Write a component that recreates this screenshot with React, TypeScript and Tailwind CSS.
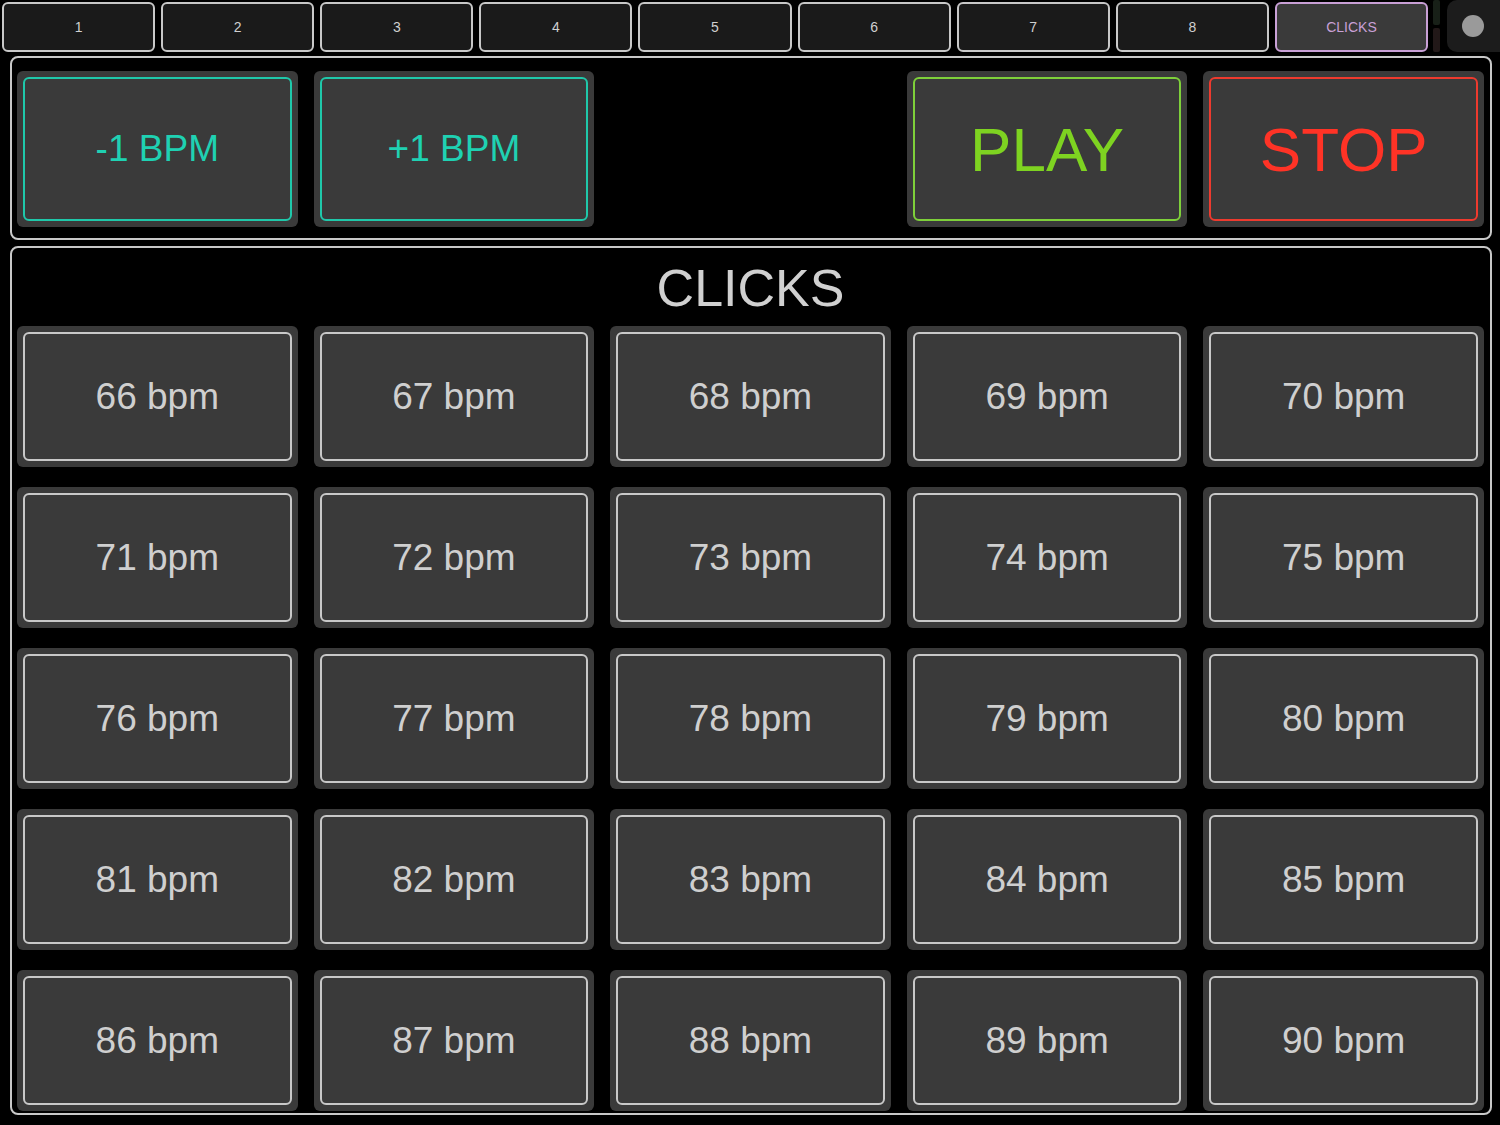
import React from "react";

const tabs = ["1", "2", "3", "4", "5", "6", "7", "8", "CLICKS"];
const bpms = Array.from({ length: 25 }, (_, i) => 66 + i);

const Pad = ({
  label,
  ring,
  text,
  size,
}: {
  label: string;
  ring: string;
  text: string;
  size: string;
}) => (
  <div className="bg-[#3a3a3a] rounded-[6px] p-[6px] flex">
    <button
      className={`flex-1 rounded-[6px] border-2 ${ring} ${text} ${size} flex items-center justify-center`}
    >
      {label}
    </button>
  </div>
);

export default function App() {
  return (
    <div
      className="w-[1500px] h-[1125px] bg-black overflow-hidden flex flex-col"
      style={{ fontFamily: '"Liberation Sans", Arial, sans-serif' }}
    >
      {/* tab strip */}
      <div className="flex h-[52px] shrink-0">
        <div className="grid grid-cols-9 gap-[6px] w-[1428px] pl-[2px] pt-[2px]">
          {tabs.map((t) => (
            <div
              key={t}
              className={`h-[50px] rounded-[6px] border-2 flex items-center justify-center text-[14px] ${
                t === "CLICKS"
                  ? "border-[#c9a0d6] bg-[#3a3a3a] text-[#c9a0d6]"
                  : "border-[#c8c8c8] bg-[#1a1a1a] text-[#d0d0d0]"
              }`}
            >
              {t}
            </div>
          ))}
        </div>
        <div className="ml-[5px] w-[7px] flex flex-col gap-[3px]">
          <div className="h-[25px] bg-[#182018] rounded-[2px]" />
          <div className="flex-1 bg-[#221818] rounded-[2px]" />
        </div>
        <div className="ml-[7px] flex-1 bg-[#1c1c1c] rounded-l-[10px] flex items-center pl-[15px]">
          <div className="w-[22px] h-[22px] rounded-full bg-[#9a9a9a]" />
        </div>
      </div>

      {/* transport panel */}
      <div className="ml-[10px] mr-[8px] mt-[4px] h-[184px] shrink-0 border-2 border-[#c8c8c8] rounded-[8px] pl-[5px] pr-[6px] pt-[13px] pb-[11px] grid grid-cols-5 gap-x-4">
        <Pad label="-1 BPM" ring="border-[#1fc8aa]" text="text-[#1fd1b2]" size="text-[37px]" />
        <Pad label="+1 BPM" ring="border-[#1fc8aa]" text="text-[#1fd1b2]" size="text-[37px]" />
        <div />
        <Pad label="PLAY" ring="border-[#7ed03a]" text="text-[#7ed321]" size="text-[62px]" />
        <Pad label="STOP" ring="border-[#ee3a2e]" text="text-[#ff3326]" size="text-[62px]" />
      </div>

      {/* clicks panel */}
      <div className="ml-[10px] mr-[8px] mt-[6px] mb-[10px] flex-1 border-2 border-[#c8c8c8] rounded-[8px] pl-[5px] pr-[6px] flex flex-col">
        <div className="h-[78px] flex items-center justify-center text-[52px] text-[#d0d0d0] pt-[2px]">
          CLICKS
        </div>
        <div className="grid grid-cols-5 gap-x-4 gap-y-5 auto-rows-[141px]">
          {bpms.map((b) => (
            <Pad
              key={b}
              label={`${b} bpm`}
              ring="border-[#c8c8c8]"
              text="text-[#cfcfcf]"
              size="text-[37px]"
            />
          ))}
        </div>
      </div>
    </div>
  );
}
